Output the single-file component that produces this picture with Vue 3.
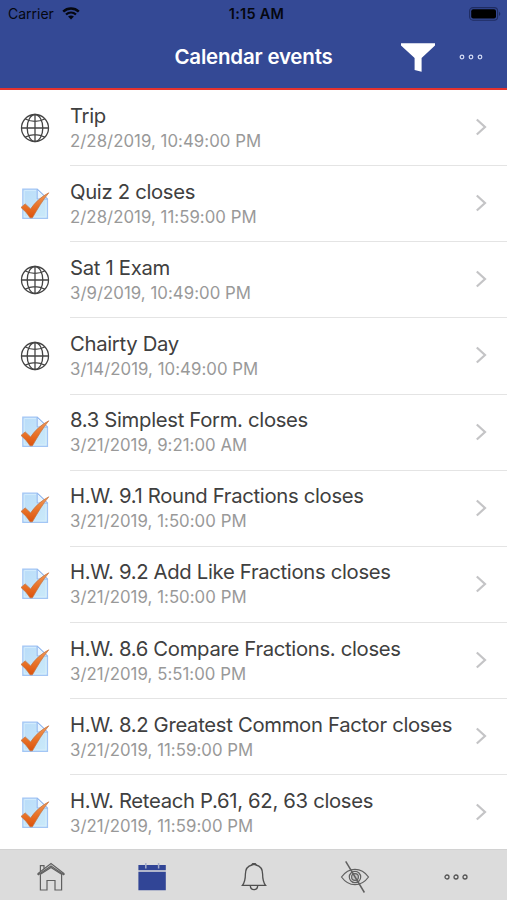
<template>
  <div class="screen">
    <header class="header">
      <div class="status-bar">
        <div class="carrier">
          <span>Carrier</span>
          <svg width="18" height="13" viewBox="0 0 18 13" fill="none" stroke="#05070f">
            <path d="M1.2 4.6C5.6.5 12.4.5 16.8 4.6" stroke-width="2.5" />
            <path d="M4 7.5c3-2.6 7-2.6 10 0" stroke-width="2.3" />
            <path d="M6.1 9.5c1.7-1.4 4.1-1.4 5.8 0L9 12.4z" fill="#05070f" stroke="none" />
          </svg>
        </div>
        <span class="clock">1:15 AM</span>
        <svg class="battery" width="32" height="14" viewBox="0 0 32 14">
          <rect x="0.6" y="0.6" width="28" height="12.6" rx="3.4" fill="none" stroke="#1f2c62" stroke-width="1.1" />
          <rect x="2.2" y="2.3" width="24.8" height="9.3" rx="2" fill="#000" />
          <path d="M30 4.8c1.8.8 1.8 3.4 0 4.2z" fill="#1f2c62" />
        </svg>
      </div>

      <div class="title-bar">
        <h1 class="title">Calendar events</h1>
        <div class="actions">
          <svg width="34" height="30" viewBox="0 0 34 30" fill="#fff">
            <path d="M0 1.2h34v2.3L20.6 16v13.8l-7-1.8V16L0 3.5z" />
          </svg>
          <svg class="more" width="24" height="8" viewBox="0 0 24 8" fill="none" stroke="#d5dcf5" stroke-width="1.2">
            <circle v-for="x in [3, 12, 21]" :key="x" :cx="x" cy="4" r="1.8" />
          </svg>
        </div>
      </div>
    </header>

    <main class="events">
      <div v-for="event in events" :key="event.title" class="event">
        <div class="event-icon">
          <svg v-if="event.type === 'site'" width="30" height="30" viewBox="0 0 30 30" fill="none" stroke="#444" stroke-width="1.3">
            <circle cx="15" cy="15" r="13.5" />
            <ellipse cx="15" cy="15" rx="7.8" ry="13.5" />
            <path d="M15 1.5v27M1.5 15h27M5 5.7c5.8 3.5 14.2 3.5 20 0M5 24.3c5.8-3.5 14.2-3.5 20 0" />
          </svg>
          <svg v-else width="30" height="32" viewBox="0 0 30 32">
            <defs>
              <linearGradient id="paper" x1="0" y1="0" x2="1" y2="1">
                <stop offset="0" stop-color="#b9dcf9" />
                <stop offset="1" stop-color="#cbeaf9" />
              </linearGradient>
              <linearGradient id="tick" x1="0" y1="0" x2="0" y2="1">
                <stop offset="0" stop-color="#f09a5c" />
                <stop offset="0.5" stop-color="#e9752b" />
                <stop offset="1" stop-color="#dc520c" />
              </linearGradient>
            </defs>
            <path d="M2.8 1.2h14.4L27.5 11v19.3H2.8z" fill="url(#paper)" stroke="#a3c6f5" stroke-width="1.2" />
            <path d="M4.2 2.6h12M4.2 2.6v26.3h21.8V12" fill="none" stroke="#d9effd" stroke-width="0.8" />
            <path d="M17.2 1.2V11h10.3z" fill="#e6f4ff" stroke="#91b6ee" />
            <path d="M1 19.4l4.2-3.5 5.4 5C15.5 13.9 21 8.9 28.8 4.8 22.7 12 17.8 20.6 12.4 29.8H10C7.5 25.7 4.7 22.6 1 19.4z" fill="url(#tick)" stroke="#c4713c" stroke-width="0.7" />
          </svg>
        </div>
        <div class="event-body">
          <div class="event-text">
            <h2>{{ event.title }}</h2>
            <p>{{ event.date }}</p>
          </div>
          <svg class="chevron" width="12" height="18" viewBox="0 0 12 18" fill="none" stroke="#c4c4c6" stroke-width="2.2">
            <path d="M1.8 1.5L10 9l-8.2 7.5" />
          </svg>
        </div>
      </div>
    </main>

    <nav class="tabs">
      <a class="tab">
        <svg width="30" height="30" viewBox="0 0 30 30" fill="none" stroke="#606060" stroke-width="1.2">
          <path d="M2 13v-1.4L15 1.6l13 10V13M2 13L15 4l13 9" />
          <path d="M4.4 12.3V28H11V18.5h8V28h6.6V12.3L15 5.4 4.4 12.3" />
          <path d="M4.4 9.5V3.7H8v3" />
        </svg>
      </a>
      <a class="tab">
        <svg width="30" height="30" viewBox="0 0 30 30">
          <path d="M1.4 3h27.4v5.2H1.4zM1.4 9.8h27.4v18.5H1.4z" fill="#314596" />
          <path d="M8.8 1v5.6M21.6 1v5.6" stroke="#a5adca" stroke-width="1.5" />
        </svg>
      </a>
      <a class="tab">
        <svg width="30" height="30" viewBox="0 0 30 30" fill="none" stroke="#505050" stroke-width="1.3">
          <path d="M13 3c0-1.8 4-1.8 4 0 4.8 1.2 6.6 4.5 6.6 9 0 6.5.6 8.4 3 11.4H3.4c2.4-3 3-4.9 3-11.4 0-4.5 1.8-7.8 6.6-9z" />
          <path d="M13 2.6c.4-1.3 3.6-1.3 4 0z" fill="#505050" />
          <path d="M11.3 23.6c.3 5.4 7.1 5.4 7.4 0" />
        </svg>
      </a>
      <a class="tab">
        <svg width="30" height="34" viewBox="0 0 30 34" fill="none" stroke="#606060" stroke-width="1.2">
          <path d="M1.5 17C8.8 6.8 21.2 6.8 28.5 17 21.2 27.2 8.8 27.2 1.5 17z" />
          <circle cx="15" cy="17" r="5.7" />
          <circle cx="15" cy="17" r="3.4" fill="#c4c4c4" />
          <path d="M5.7 1.4L24.4 32.5" stroke-width="1.5" />
        </svg>
      </a>
      <a class="tab">
        <svg width="24" height="8" viewBox="0 0 24 8" fill="none" stroke="#555" stroke-width="1.3">
          <circle v-for="x in [3, 12, 21]" :key="x" :cx="x" cy="4" r="2" />
        </svg>
      </a>
    </nav>
  </div>
</template>

<script setup>
import { ref } from 'vue'

const events = ref([
  { type: 'site', title: 'Trip', date: '2/28/2019, 10:49:00 PM' },
  { type: 'quiz', title: 'Quiz 2 closes', date: '2/28/2019, 11:59:00 PM' },
  { type: 'site', title: 'Sat 1 Exam', date: '3/9/2019, 10:49:00 PM' },
  { type: 'site', title: 'Chairty Day', date: '3/14/2019, 10:49:00 PM' },
  { type: 'quiz', title: '8.3 Simplest Form. closes', date: '3/21/2019, 9:21:00 AM' },
  { type: 'quiz', title: 'H.W. 9.1 Round Fractions closes', date: '3/21/2019, 1:50:00 PM' },
  { type: 'quiz', title: 'H.W. 9.2 Add Like Fractions closes', date: '3/21/2019, 1:50:00 PM' },
  { type: 'quiz', title: 'H.W. 8.6 Compare Fractions. closes', date: '3/21/2019, 5:51:00 PM' },
  { type: 'quiz', title: 'H.W. 8.2 Greatest Common Factor closes', date: '3/21/2019, 11:59:00 PM' },
  { type: 'quiz', title: 'H.W. Reteach P.61, 62, 63 closes', date: '3/21/2019, 11:59:00 PM' }
])
</script>

<style>
body {
  margin: 0;
  background: #fff;
}
</style>

<style scoped>
.screen {
  height: 900px;
  display: flex;
  flex-direction: column;
  overflow: hidden;
  background: #fff;
  font-family: Inter, 'Liberation Sans', sans-serif;
}

svg {
  display: block;
  flex: none;
}

.header {
  height: 90px;
  flex: none;
  box-sizing: border-box;
  background: #344995;
  border-bottom: 2px solid #e5332f;
}

.status-bar {
  height: 27px;
  display: grid;
  grid-template-columns: 1fr auto 1fr;
  align-items: center;
  padding: 0 6px 0 8px;
  color: #05070f;
  font-size: 14px;
}

.carrier {
  display: flex;
  align-items: center;
  gap: 8px;
}

.clock {
  padding-left: 4px;
  font-size: 14.5px;
  font-weight: 600;
  letter-spacing: 0.25px;
}

.battery {
  justify-self: end;
}

.title-bar {
  height: 60px;
  display: grid;
  grid-template-columns: 1fr auto 1fr;
  align-items: center;
}

.title {
  grid-column: 2;
  margin: 0;
  padding-bottom: 2px;
  color: #fff;
  font-size: 20.5px;
  font-weight: 600;
  letter-spacing: -0.2px;
}

.actions {
  display: flex;
  align-items: center;
  justify-content: flex-end;
  gap: 24px;
  padding-right: 24.5px;
}

.events {
  flex: 1;
  min-height: 0;
  overflow: hidden;
}

.event {
  height: 76.15px;
  display: flex;
}

.event-icon {
  width: 70px;
  box-sizing: border-box;
  display: flex;
  align-items: center;
  padding: 0 0 1px 20px;
}

.event-body {
  flex: 1;
  display: flex;
  align-items: center;
  justify-content: space-between;
  padding: 0 20px 1px 0;
  border-bottom: 1px solid #e4e4e4;
}

.event:last-child .event-body {
  border-bottom-color: transparent;
}

.event-text {
  padding-top: 2px;
}

.event h2 {
  margin: 0;
  color: #404040;
  font-size: 20.3px;
  font-weight: 400;
  line-height: 26px;
  letter-spacing: -0.32px;
}

.event p {
  margin: 0;
  color: #999;
  font-size: 16.8px;
  line-height: 25px;
  letter-spacing: 0.04px;
}

.tabs {
  height: 51px;
  flex: none;
  box-sizing: border-box;
  display: flex;
  background: #dcdcdc;
  border-top: 1px solid #d2d2d2;
}

.tab {
  flex: 1;
  display: flex;
  align-items: center;
  justify-content: center;
  padding-top: 3px;
}
</style>
